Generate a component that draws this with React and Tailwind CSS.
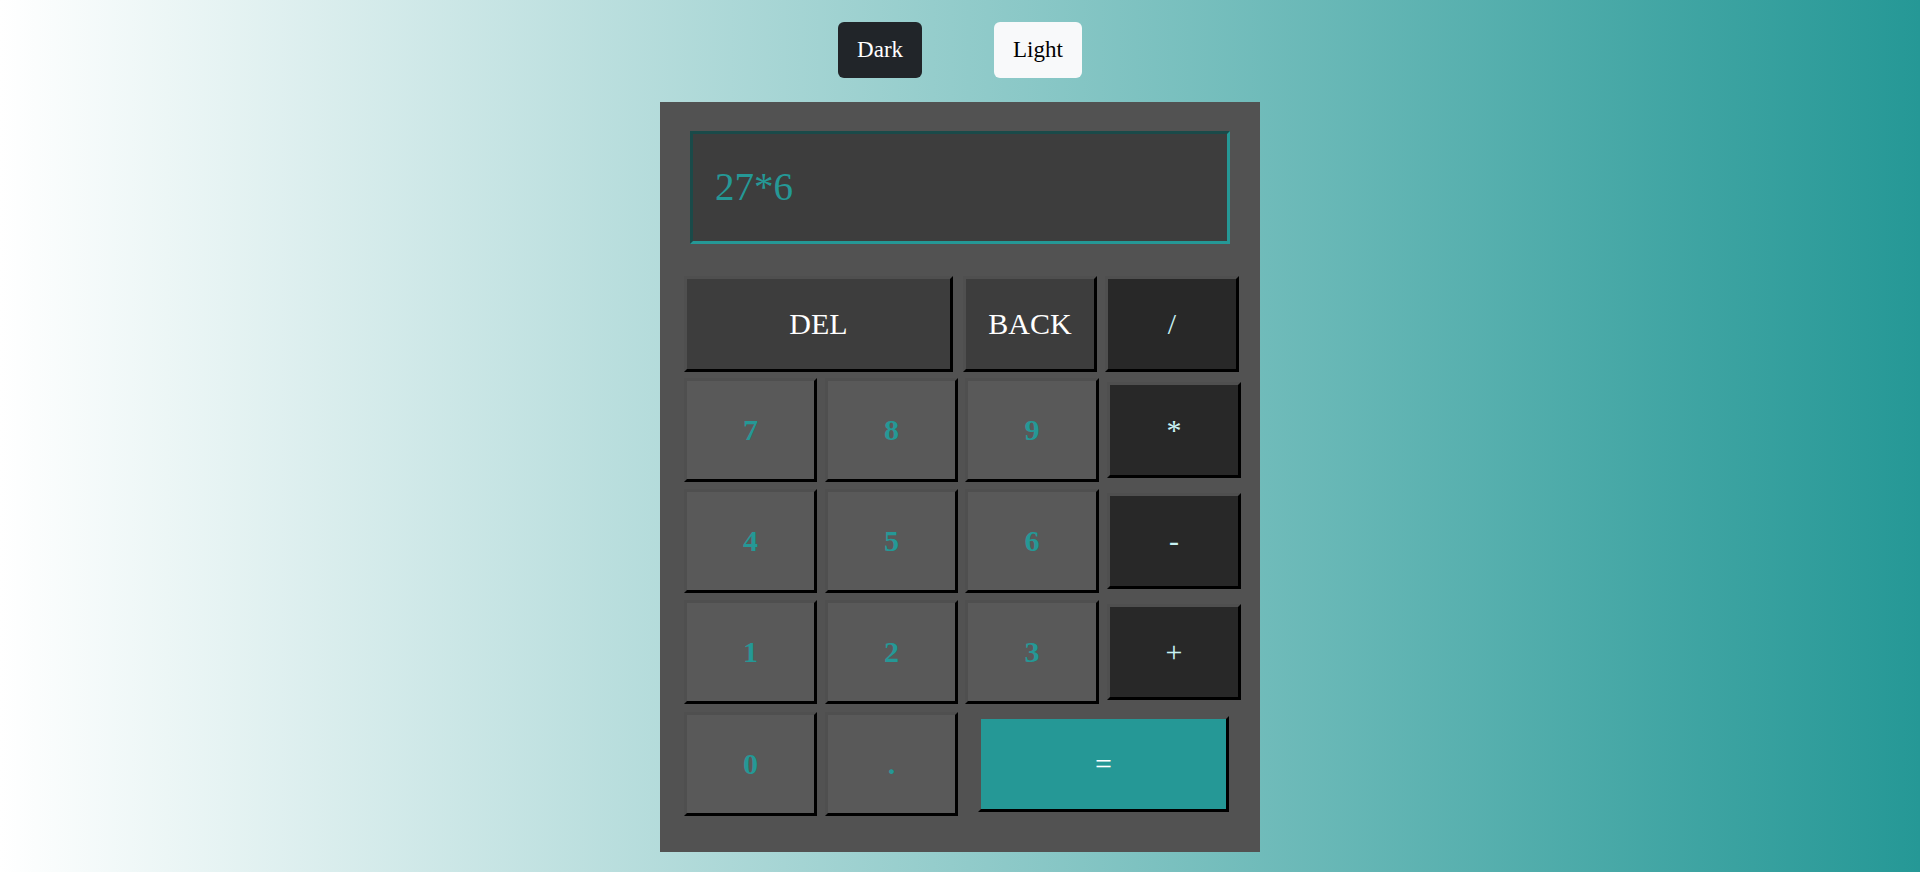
import React, { useState } from "react";

const keyBase =
  "flex items-center justify-center border-[3px] border-t-[#4f4f4f] border-l-[#4f4f4f] border-r-black border-b-black text-[30px] leading-none cursor-pointer";

const Key = ({ label, className, onClick }) => (
  <button onClick={onClick} className={`${keyBase} ${className}`}>
    {label}
  </button>
);

const digitCls = "h-[104px] bg-[#595959] text-[#259896] font-bold";
const opCls = "h-[96px] w-[134px] self-center bg-[#282828] text-[#c8f2f4]";

const App = () => {
  const [expr, setExpr] = useState("27*6");

  const press = (v) => setExpr((e) => e + v);
  const back = () => setExpr((e) => e.slice(0, -1));
  const clear = () => setExpr("");
  const solve = () => {
    try {
      // eslint-disable-next-line no-new-func
      setExpr(String(Function(`return (${expr})`)()));
    } catch (err) {
      setExpr("");
    }
  };

  return (
    <div className="min-h-screen bg-[linear-gradient(to_right,#ffffff,#259896)] flex flex-col items-center pt-[22px] font-['Liberation_Serif','Times_New_Roman',serif]">
      <div className="flex gap-[72px]">
        <button className="h-[56px] px-[19px] rounded-[6px] bg-[#212529] text-white text-[23px]">Dark</button>
        <button className="h-[56px] px-[19px] rounded-[6px] bg-[#f8f9fa] text-black text-[23px]">Light</button>
      </div>

      <div className="mt-[24px] w-[600px] h-[750px] bg-[#525252] pt-[29px]">
        <div className="mx-auto w-[540px] h-[113px] bg-[#3d3d3d] border-[3px] border-t-[#1a4a49] border-l-[#1a4a49] border-r-[#259896] border-b-[#259896] flex items-center pl-[22px] text-[39px] text-[#259896]">
          {expr}
        </div>

        <div className="ml-[24px] mt-[32px]">
          <div className="flex h-[96px]">
            <Key label="DEL" onClick={clear} className="w-[269px] h-[96px] bg-[#3d3d3d] text-white" />
            <Key label="BACK" onClick={back} className="ml-[10px] w-[134px] h-[96px] bg-[#3d3d3d] text-white" />
            <Key label="/" onClick={() => press("/")} className="ml-[8px] w-[134px] h-[96px] bg-[#282828] text-[#c8f2f4]" />
          </div>

          <div className="flex h-[104px] mt-[6px]">
            <Key label="7" onClick={() => press("7")} className={`w-[133px] ${digitCls}`} />
            <Key label="8" onClick={() => press("8")} className={`ml-[8px] w-[133px] ${digitCls}`} />
            <Key label="9" onClick={() => press("9")} className={`ml-[7px] w-[134px] ${digitCls}`} />
            <Key label="*" onClick={() => press("*")} className={`ml-[8px] ${opCls}`} />
          </div>

          <div className="flex h-[104px] mt-[7px]">
            <Key label="4" onClick={() => press("4")} className={`w-[133px] ${digitCls}`} />
            <Key label="5" onClick={() => press("5")} className={`ml-[8px] w-[133px] ${digitCls}`} />
            <Key label="6" onClick={() => press("6")} className={`ml-[7px] w-[134px] ${digitCls}`} />
            <Key label="-" onClick={() => press("-")} className={`ml-[8px] ${opCls}`} />
          </div>

          <div className="flex h-[104px] mt-[7px]">
            <Key label="1" onClick={() => press("1")} className={`w-[133px] ${digitCls}`} />
            <Key label="2" onClick={() => press("2")} className={`ml-[8px] w-[133px] ${digitCls}`} />
            <Key label="3" onClick={() => press("3")} className={`ml-[7px] w-[134px] ${digitCls}`} />
            <Key label="+" onClick={() => press("+")} className={`ml-[8px] ${opCls}`} />
          </div>

          <div className="flex h-[104px] mt-[8px]">
            <Key label="0" onClick={() => press("0")} className={`w-[133px] ${digitCls}`} />
            <Key label="." onClick={() => press(".")} className={`ml-[8px] w-[133px] ${digitCls}`} />
            <Key label="=" onClick={solve} className="ml-[20px] w-[251px] h-[96px] self-center bg-[#259896] text-white border-t-[#525252] border-l-[#525252]" />
          </div>
        </div>
      </div>
    </div>
  );
};

export default App;
